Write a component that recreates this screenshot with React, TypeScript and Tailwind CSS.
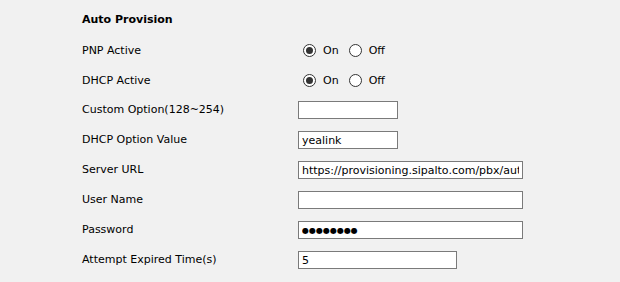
import React from 'react';

type Field =
  | { label: string; kind: 'radio'; on: boolean }
  | { label: string; kind: 'input'; value: string; width: string; password?: boolean };

const fields: Field[] = [
  { label: 'PNP Active', kind: 'radio', on: true },
  { label: 'DHCP Active', kind: 'radio', on: true },
  { label: 'Custom Option(128~254)', kind: 'input', value: '', width: 'w-[100px]' },
  { label: 'DHCP Option Value', kind: 'input', value: 'yealink', width: 'w-[100px]' },
  { label: 'Server URL', kind: 'input', value: 'https://provisioning.sipalto.com/pbx/auto', width: 'w-[225px]' },
  { label: 'User Name', kind: 'input', value: '', width: 'w-[225px]' },
  { label: 'Password', kind: 'input', value: '●●●●●●●●', width: 'w-[225px]', password: true },
  { label: 'Attempt Expired Time(s)', kind: 'input', value: '5', width: 'w-[159px]' },
];

const Radio: React.FC<{ checked: boolean }> = ({ checked }) => (
  <span className="w-[13px] h-[13px] rounded-full border border-[#333] bg-white flex items-center justify-center shrink-0">
    {checked && <span className="w-[7px] h-[7px] rounded-full bg-[#333]" />}
  </span>
);

const App: React.FC = () => {
  return (
    <div
      className="w-[620px] h-[282px] bg-[#f1f1f1] text-black text-[11px] pl-[82px] pt-[5px] overflow-hidden"
      style={{ fontFamily: '"DejaVu Sans", Verdana, sans-serif' }}
    >
      <div className="h-[30px] flex items-center font-bold">Auto Provision</div>

      {fields.map((f) => (
        <div key={f.label} className="grid grid-cols-[216px_1fr] h-[30px] items-center">
          <span className={f.kind === 'radio' ? 'pt-[2px]' : ''}>{f.label}</span>
          {f.kind === 'radio' ? (
            <div className="flex items-center pl-[5px] pt-[1px]">
              <Radio checked={f.on} />
              <span className="ml-[7px] pt-[1px]">On</span>
              <span className="ml-[10px]">
                <Radio checked={!f.on} />
              </span>
              <span className="ml-[7px] pt-[1px]">Off</span>
            </div>
          ) : (
            <input
              readOnly
              value={f.value}
              className={`${f.width} h-[18px] border border-[#7a7a7a] bg-white px-[3px] outline-none text-black ${f.password ? 'text-[8px]' : 'text-[11px]'}`}
              style={{ fontFamily: '"DejaVu Sans", Verdana, sans-serif' }}
            />
          )}
        </div>
      ))}
    </div>
  );
};

export default App;
